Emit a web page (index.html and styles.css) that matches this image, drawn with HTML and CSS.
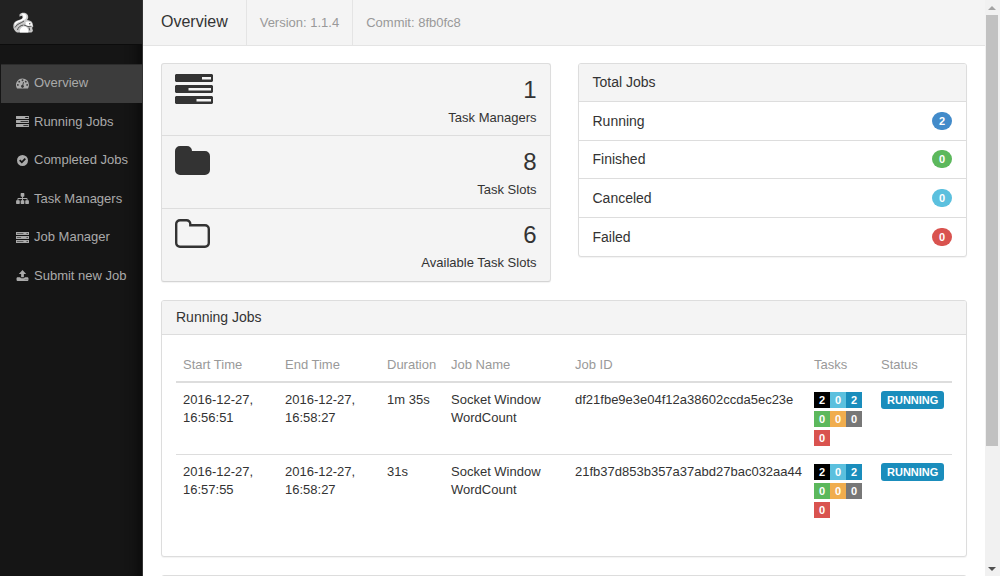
FILE: index.html
```html
<!DOCTYPE html>
<html lang="en">
<head>
    <meta charset="UTF-8">
    <meta name="viewport" content="width=device-width, initial-scale=1.0">
    <title>Dashboard - Overview</title>
    <link rel="stylesheet" href="styles.css">
</head>
<body>
    <!-- icon shapes shared by the sidebar and the stats panel -->
    <svg class="sprite" aria-hidden="true">
        <symbol id="icon-tasks" viewBox="0 0 38 30" preserveAspectRatio="none">
            <path fill-rule="evenodd" d="M1 0h36l1 1v6l-1 1H1L0 7V1zM27 3v2.500h9V3zM1 11h36l1 1v6l-1 1H1l-1-1v-6zM13.500 14v2.500H36V14zM1 22h36l1 1v6l-1 1H1l-1-1v-6zM21.500 25v2.500H36V25z"/>
        </symbol>
        <symbol id="icon-dashboard" viewBox="0 0 28 22">
            <path fill-rule="evenodd" d="M14 0a14 14 0 0 1 14 14c0 2.700-.8 5.300-2.200 7.500-.2.300-.5.500-.9.500H3.100c-.4 0-.7-.2-.9-.5A14 14 0 0 1 14 0zM4 12a2 2 0 1 0 0 4 2 2 0 0 0 0-4zM7 5a2 2 0 1 0 0 4 2 2 0 0 0 0-4zM14 2a2 2 0 1 0 0 4 2 2 0 0 0 0-4zM21 5a2 2 0 1 0 0 4 2 2 0 0 0 0-4zM24 12a2 2 0 1 0 0 4 2 2 0 0 0 0-4zM15.300 8l-1.700 6.100a3 3 0 1 0 2 .5L17.200 8.500z"/>
        </symbol>
        <symbol id="icon-check" viewBox="0 0 24 24">
            <path fill-rule="evenodd" d="M12 0a12 12 0 1 1 0 24 12 12 0 0 1 0-24zM10.500 18.500l9-9-2.800-2.800-6.200 6.200-3.200-3.200-2.800 2.800z"/>
        </symbol>
        <symbol id="icon-sitemap" viewBox="0 0 28 24">
            <path d="M11 0h6l1 1v6l-1 1h-2v3h8a2 2 0 0 1 2 2v3h2l1 1v6l-1 1h-6l-1-1v-6l1-1h2v-3h-8v3h2l1 1v6l-1 1h-6l-1-1v-6l1-1h2v-3H5v3h2l1 1v6l-1 1H1l-1-1v-6l1-1h2v-3a2 2 0 0 1 2-2h8V8h-2l-1-1V1z"/>
        </symbol>
        <symbol id="icon-server" viewBox="0 0 28 22" preserveAspectRatio="none">
            <path fill-rule="evenodd" d="M0 0h28v6H0zM2 2.500v1h14v-1zM23 2v2h2V2zM0 8h28v6H0zM2 10.500v1h9v-1zM23 10v2h2v-2zM0 16h28v6H0zM2 18.500v1h14v-1zM23 18v2h2v-2z"/>
        </symbol>
        <symbol id="icon-upload" viewBox="0 0 26 24">
            <path fill-rule="evenodd" d="M13 0l8 8.500h-5V16h-6V8.500H5zM1.500 16H8c.5 1.300 1.500 2 3 2h4c1.500 0 2.500-.7 3-2h6.500L26 17.500v5L24.500 24h-23L0 22.500v-5zM18 20v1.500h1.500V20zM22 20v1.500h1.500V20z"/>
        </symbol>
        <symbol id="icon-folder" viewBox="0 0 36 30">
            <path d="M5 0h7a5 5 0 0 1 5 5h13a5 5 0 0 1 5 5v14a5 5 0 0 1-5 5H5a5 5 0 0 1-5-5V5a5 5 0 0 1 5-5z"/>
        </symbol>
        <symbol id="icon-folder-open" viewBox="0 0 36 30">
            <path fill="none" stroke="#333" stroke-width="2.400" d="M5 1.200h6.500A3.800 3.800 0 0 1 15.300 5v1.200H30a3.800 3.800 0 0 1 3.800 3.800v14a3.800 3.800 0 0 1-3.800 3.800H5A3.800 3.800 0 0 1 1.200 24V5A3.800 3.800 0 0 1 5 1.200z"/>
        </symbol>
    </svg>

    <div class="app">
        <aside class="sidebar">
            <a class="brand" href="#" aria-label="Home">
                <svg class="logo" viewBox="0 0 21 21">
                    <!-- body, tail, head -->
                    <path fill="#c8c8c8" d="M6.500 2.500C8 .3 12 0 14 2c1.800 2 1.500 4.500 0 6 2 0 4.500.8 5.500 3l.8 3.500-1.200 1.200.9 3.300-1.500 1.500H4C1.500 19 0 16.500.3 13.500.6 10.500 2.500 8.800 5 8.200c2-.5 4.300-1.200 4.500-2.700.1-1.500-1.500-1.800-3-.8z"/>
                    <path fill="#fff" d="M8 2c3-1.300 5.800.3 5.500 3-.3 2.300-3 3.300-5.500 4.300-3 1-5.500 2-6 5C.8 11 3 9.300 5.500 8.700 8 8 10.300 7 10.300 5 10.300 3.500 9.500 2.500 8 2z"/>
                    <path fill="#fff" d="M7 20.500c-.5-3.500 1.500-6 4.500-6 2.500 0 4 2.500 3.800 6zM12.500 10c2-1 4.500-.5 6 1l.8 3-2.300.5-4-1z"/>
                    <path fill="none" stroke="#333" stroke-width=".8" d="M2 15.500c2-4 6-4 9-6.500M4.500 18c.5-2.500 2.500-4.500 6-5M11 13l4 1.500 3.500-.3M16 15.500l.8 3"/>
                    <circle cx="16.800" cy="11.700" r=".7" fill="#333"/>
                </svg>
            </a>
            <nav class="menu">
                <a class="active" href="#"><svg class="icon"><use href="#icon-dashboard"/></svg>Overview</a>
                <a href="#"><svg class="icon"><use href="#icon-tasks"/></svg>Running Jobs</a>
                <a href="#"><svg class="icon"><use href="#icon-check"/></svg>Completed Jobs</a>
                <a href="#"><svg class="icon"><use href="#icon-sitemap"/></svg>Task Managers</a>
                <a href="#"><svg class="icon"><use href="#icon-server"/></svg>Job Manager</a>
                <a href="#"><svg class="icon"><use href="#icon-upload"/></svg>Submit new Job</a>
            </nav>
        </aside>

        <main class="main">
            <header class="navbar">
                <h1>Overview</h1>
                <span class="info">Version: 1.1.4</span>
                <span class="info">Commit: 8fb0fc8</span>
            </header>

            <div class="content">
                <div class="row">
                    <section class="panel stats">
                        <div class="stat">
                            <svg class="stat-icon wide"><use href="#icon-tasks"/></svg>
                            <div class="stat-text"><strong>1</strong><span>Task Managers</span></div>
                        </div>
                        <div class="stat">
                            <svg class="stat-icon"><use href="#icon-folder"/></svg>
                            <div class="stat-text"><strong>8</strong><span>Task Slots</span></div>
                        </div>
                        <div class="stat">
                            <svg class="stat-icon"><use href="#icon-folder-open"/></svg>
                            <div class="stat-text"><strong>6</strong><span>Available Task Slots</span></div>
                        </div>
                    </section>

                    <section class="panel totals">
                        <h2>Total Jobs</h2>
                        <ul>
                            <li>Running <span class="badge primary">2</span></li>
                            <li>Finished <span class="badge success">0</span></li>
                            <li>Canceled <span class="badge info-bg">0</span></li>
                            <li>Failed <span class="badge danger">0</span></li>
                        </ul>
                    </section>
                </div>

                <section class="panel jobs">
                    <h2>Running Jobs</h2>
                    <div class="panel-body">
                        <table>
                            <thead>
                                <tr>
                                    <th class="col-time">Start Time</th>
                                    <th class="col-time">End Time</th>
                                    <th class="col-duration">Duration</th>
                                    <th class="col-name">Job Name</th>
                                    <th>Job ID</th>
                                    <th class="col-tasks">Tasks</th>
                                    <th class="col-status">Status</th>
                                </tr>
                            </thead>
                            <tbody>
                                <tr>
                                    <td>2016-12-27, 16:56:51</td>
                                    <td>2016-12-27, 16:58:27</td>
                                    <td>1m 35s</td>
                                    <td>Socket Window WordCount</td>
                                    <td>df21fbe9e3e04f12a38602ccda5ec23e</td>
                                    <td>
                                        <div class="tasks">
                                            <span class="created">2</span><span class="info-bg">0</span><span class="running">2</span>
                                            <span class="success">0</span><span class="warning">0</span><span class="muted">0</span>
                                            <span class="danger">0</span>
                                        </div>
                                    </td>
                                    <td><span class="label running">RUNNING</span></td>
                                </tr>
                                <tr>
                                    <td>2016-12-27, 16:57:55</td>
                                    <td>2016-12-27, 16:58:27</td>
                                    <td>31s</td>
                                    <td>Socket Window WordCount</td>
                                    <td>21fb37d853b357a37abd27bac032aa44</td>
                                    <td>
                                        <div class="tasks">
                                            <span class="created">2</span><span class="info-bg">0</span><span class="running">2</span>
                                            <span class="success">0</span><span class="warning">0</span><span class="muted">0</span>
                                            <span class="danger">0</span>
                                        </div>
                                    </td>
                                    <td><span class="label running">RUNNING</span></td>
                                </tr>
                            </tbody>
                        </table>
                    </div>
                </section>

                <section class="panel next"></section>
            </div>
        </main>

        <div class="scrollbar" aria-hidden="true">
            <span class="arrow up"></span>
            <div class="track"><div class="thumb"></div></div>
            <span class="arrow down"></span>
        </div>
    </div>
</body>
</html>
```
FILE: styles.css
```css
* {
    box-sizing: border-box;
}
body {
    margin: 0;
    font-family: "Liberation Sans", Arial, sans-serif;
    font-size: 13px;
    line-height: 18px;
    color: #333;
    background-color: #fff;
}
h1, h2, ul {
    margin: 0;
    padding: 0;
    font-weight: normal;
    list-style: none;
}
.sprite {
    display: none;
}
.app {
    display: flex;
    height: 100vh;
    overflow: hidden;
}

/* sidebar */
.sidebar {
    flex: 0 0 143px;
    background-color: #151515;
    border-right: 1px solid #333;
    box-shadow: inset -12px 0 12px -8px #0a0a0a;
}
.brand {
    display: flex;
    align-items: center;
    height: 45px;
    padding: 1px 0 0 13px;
    background-color: #222;
    border-bottom: 1px solid #0c0c0c;
}
.logo {
    width: 21px;
    height: 21px;
}
.menu {
    display: grid;
    grid-template-rows: repeat(6, 1fr);
    height: 231px;
    margin-top: 19px;
    padding-left: 1px;
}
.menu a {
    display: flex;
    align-items: center;
    gap: 5px;
    padding-left: 15px;
    color: #aaa;
    text-decoration: none;
}
.menu a.active {
    background-color: #3c3c3c;
    box-shadow: inset 0 1px 0 #2c2c2c;
}
.icon {
    width: 13px;
    height: 11px;
    fill: #aaa;
}

/* top bar */
.main {
    flex: 1;
    min-width: 0;
    overflow: hidden;
}
.navbar {
    display: flex;
    height: 46px;
    background-color: #f4f4f4;
    border-bottom: 1px solid #e4e4e4;
    line-height: 45px;
}
.navbar h1 {
    padding: 0 18px;
    font-size: 16px;
    line-height: 43px;
}
.navbar .info {
    padding: 0 13px;
    border-left: 1px solid #e4e4e4;
    color: #999;
}

/* panels */
.content {
    padding: 17px 18px;
}
.row {
    display: grid;
    grid-template-columns: 1fr 1fr;
    align-items: start;
    gap: 27px;
    margin-bottom: 18px;
}
.panel {
    border: 1px solid #ddd;
    border-radius: 3px;
    background-color: #fff;
    box-shadow: 0 1px 1px rgba(0, 0, 0, 0.05);
    margin-bottom: 18px;
    overflow: hidden;
}
.row .panel {
    margin-bottom: 0;
}
.panel h2 {
    padding: 0 14px;
    font-size: 14px;
    line-height: 37px;
    background-color: #f4f4f4;
    border-bottom: 1px solid #ddd;
}
.stats {
    display: grid;
    grid-template-rows: repeat(3, 1fr);
    height: 219px;
    background-color: #f4f4f4;
    border-bottom-color: #d4d4d4;
}
.stat {
    display: flex;
    justify-content: space-between;
    padding: 10px 13px 0;
    border-bottom: 1px solid #ddd;
}
.stat:last-child {
    border-bottom: none;
}
.stat-icon {
    width: 36px;
    height: 30px;
    fill: #333;
}
.stat-icon.wide {
    width: 38px;
}
.stat-text {
    display: flex;
    flex-direction: column;
    gap: 3px;
    text-align: right;
}
.stat-text strong {
    font-size: 24px;
    font-weight: normal;
    line-height: 32px;
}
.totals ul {
    display: grid;
    grid-template-rows: repeat(4, 1fr);
    height: 154px;
}
.totals li {
    display: flex;
    justify-content: space-between;
    align-items: center;
    padding: 0 14px;
    font-size: 14px;
    border-bottom: 1px solid #ddd;
}
.totals li:last-child {
    border-bottom: none;
}
.badge {
    min-width: 20px;
    border-radius: 9px;
    color: #fff;
    font-size: 11px;
    font-weight: bold;
    line-height: 18px;
    text-align: center;
}

/* running jobs */
.jobs h2 {
    line-height: 33px;
}
.panel-body {
    padding: 14px 14px 30px;
}
table {
    width: 100%;
    table-layout: fixed;
    border-collapse: collapse;
}
th, td {
    padding: 7px 0 7px 7px;
    text-align: left;
    vertical-align: top;
}
th {
    color: #999;
    font-weight: normal;
    border-bottom: 2px solid #ddd;
}
td {
    height: 72px;
    padding-top: 8px;
    border-top: 1px solid #ddd;
}
.col-time {
    width: 102px;
}
.col-duration {
    width: 64px;
}
.col-name {
    width: 124px;
}
.col-tasks {
    width: 67px;
}
.col-status {
    width: 78px;
}
.tasks {
    display: grid;
    grid-template-columns: repeat(3, 16px);
    gap: 3px 0;
    padding-top: 1px;
}
.tasks span {
    color: #fff;
    font-size: 11px;
    font-weight: bold;
    line-height: 16px;
    text-align: center;
}
.label {
    display: inline-block;
    padding: 0 6px;
    border-radius: 3px;
    color: #fff;
    font-size: 11px;
    font-weight: bold;
    vertical-align: top;
}
.next {
    height: 200px;
}

.primary {
    background-color: #428bca;
}
.success {
    background-color: #5cb85c;
}
.info-bg {
    background-color: #5bc0de;
}
.danger {
    background-color: #d9534f;
}
.warning {
    background-color: #f0ad4e;
}
.muted {
    background-color: #777;
}
.created {
    background-color: #000;
}
.running {
    background-color: #1a8dbc;
}

/* scrollbar */
.scrollbar {
    display: flex;
    flex-direction: column;
    flex: 0 0 15px;
    padding: 0 2px 0 1px;
    background-color: #f1f1f1;
}
.arrow {
    height: 15px;
    display: flex;
    align-items: center;
    justify-content: center;
}
.arrow::before {
    content: "";
    border: 4px solid transparent;
}
.arrow.up::before {
    border-top: none;
    border-bottom-color: #a3a3a3;
}
.arrow.down::before {
    border-bottom: none;
    border-top-color: #505050;
}
.track {
    flex: 1;
}
.thumb {
    height: 79%;
    background-color: #c1c1c1;
}
```
